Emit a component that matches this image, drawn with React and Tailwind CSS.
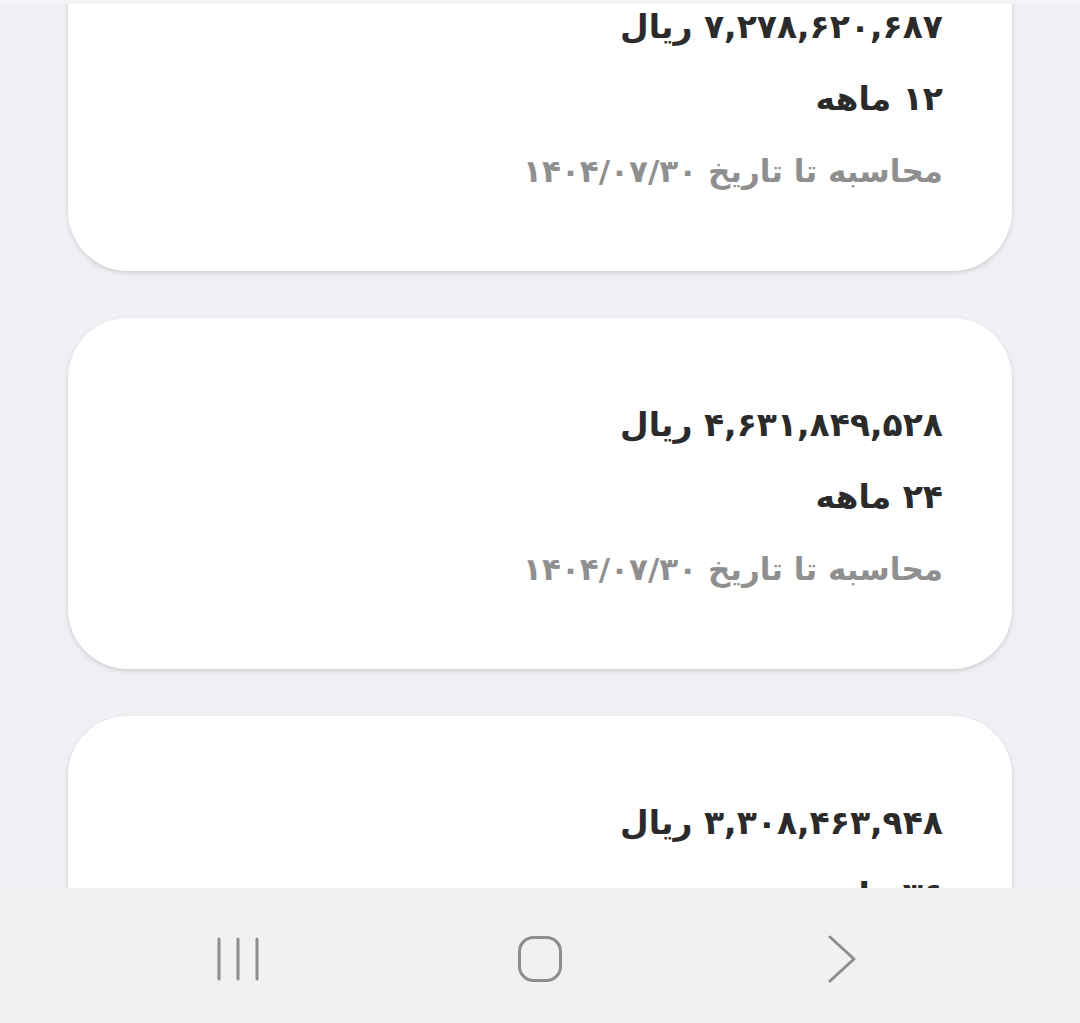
const installments = [
  { amount: "۷,۲۷۸,۶۲۰,۶۸۷", months: "۱۲" },
  { amount: "۴,۶۳۱,۸۴۹,۵۲۸", months: "۲۴" },
  { amount: "۳,۳۰۸,۴۶۳,۹۴۸", months: "۳۶" },
];

const calcDate = "۱۴۰۴/۰۷/۳۰";

function InstallmentCard({ amount, months }) {
  return (
    <div className="mx-[68px] h-[351px] shrink-0 rounded-[60px] bg-white shadow-[0_2px_4px_rgba(0,0,0,0.14)]">
      <div
        dir="rtl"
        className="pr-[69px] pt-[71px] text-right text-[33px] font-bold leading-[72px]"
        style={{ fontFamily: '"DejaVu Sans", sans-serif' }}
      >
        <div className="text-[#2b2b2b]">{amount} ریال</div>
        <div className="text-[#2b2b2b]">{months} ماهه</div>
        <div className="text-[31px] text-[#8f8f8f]">محاسبه تا تاریخ {calcDate}</div>
      </div>
    </div>
  );
}

function NavBar() {
  return (
    <div className="flex h-[135px] shrink-0 items-center justify-center bg-[#f1f1f3] pt-[6px]">
      <div className="flex w-[302px] justify-center">
        <svg width="44" height="46" viewBox="0 0 44 46" fill="none" stroke="#8e8e8e" strokeWidth="3" strokeLinecap="round">
          <line x1="3" y1="3" x2="3" y2="43" />
          <line x1="22" y1="3" x2="22" y2="43" />
          <line x1="41" y1="3" x2="41" y2="43" />
        </svg>
      </div>
      <div className="flex w-[302px] justify-center">
        <svg width="46" height="48" viewBox="0 0 46 48" fill="none" stroke="#8e8e8e" strokeWidth="3">
          <rect x="2.5" y="2.5" width="41" height="43" rx="14" />
        </svg>
      </div>
      <div className="flex w-[302px] justify-center">
        <svg width="30" height="48" viewBox="0 0 30 48" fill="none" stroke="#8e8e8e" strokeWidth="3" strokeLinecap="round" strokeLinejoin="round">
          <polyline points="3,2 27,24 3,46" />
        </svg>
      </div>
    </div>
  );
}

export default function App() {
  return (
    <div className="flex h-[1023px] w-[1080px] flex-col overflow-hidden bg-[#eff0f4]">
      <div className="h-[4px] shrink-0 bg-[#f4f4f6]" />
      <div className="flex-1 overflow-hidden">
        <div className="mt-[-84px] flex flex-col gap-[47px]">
          {installments.map((item) => (
            <InstallmentCard key={item.months} {...item} />
          ))}
        </div>
      </div>
      <NavBar />
    </div>
  );
}
